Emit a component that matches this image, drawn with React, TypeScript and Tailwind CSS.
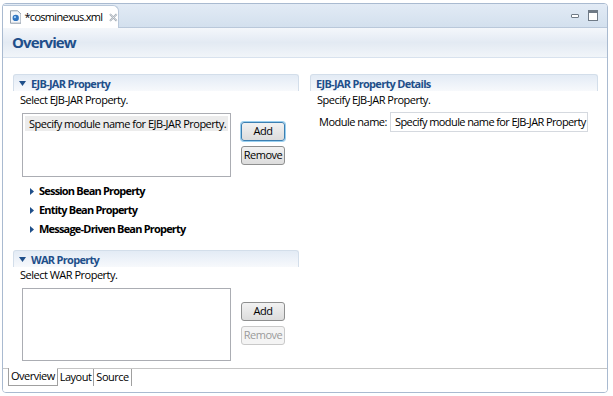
import React from "react";

const font = { fontFamily: '"Open Sans", "Noto Sans", Arial, sans-serif' };

function SectionHeader({ title, arrow }: { title: string; arrow?: boolean }) {
  return (
    <div className="h-[17px] flex items-center border border-[#d3deea] border-b-0 rounded-t-[3px] bg-gradient-to-b from-[#e3ebf5] to-[#f7f9fc] pl-[5px]">
      {arrow && (
        <svg width="7" height="5" viewBox="0 0 7 5" className="mr-[5px]">
          <path d="M0 0 L7 0 L3.5 5 Z" fill="#1f4f8a" />
        </svg>
      )}
      <span className="text-[11px] font-bold text-[#1f4f8a] leading-none tracking-[-0.7px]">{title}</span>
    </div>
  );
}

function Btn({ label, focus, disabled }: { label: string; focus?: boolean; disabled?: boolean }) {
  return (
    <div
      className={
        "w-[44px] h-[19px] rounded-[3px] flex items-center justify-center text-[11px] " +
        (focus
          ? "border border-[#3c7fb1] shadow-[0_0_0_1px_#9ad0f0] bg-gradient-to-b from-[#f2f2f2] to-[#dcdcdc] text-black"
          : disabled
          ? "border border-[#c9c9c9] bg-[#f4f4f4] text-[#9a9a9a]"
          : "border border-[#8e8f8f] bg-gradient-to-b from-[#f2f2f2] to-[#dcdcdc] text-black")
      }
    >
      {label}
    </div>
  );
}

function Twisty({ label }: { label: string }) {
  return (
    <div className="flex items-center h-[19px]">
      <svg width="4" height="7" viewBox="0 0 4 7" className="mr-[5px]">
        <path d="M0 0 L4 3.5 L0 7 Z" fill="#1f4f8a" />
      </svg>
      <span className="text-[11px] font-bold text-black tracking-[-0.8px]">{label}</span>
    </div>
  );
}

export default function App() {
  return (
    <div className="w-[613px] h-[396px] bg-white text-[11px] text-black tracking-[-0.5px]" style={font}>
      <div className="ml-[2px] mt-[3px] w-[606px] h-[390px] border border-[#a9bad0] rounded-[4px] flex flex-col overflow-hidden">
        {/* tab strip */}
        <div className="h-[24px] flex items-end bg-gradient-to-b from-[#e2ebf5] to-[#d3e0ee] border-b border-[#b9c8da] relative">
          <div className="h-[23px] w-[116px] bg-white border-r border-t border-[#b9c8da] rounded-tr-[6px] flex items-center pl-[7px] -mb-[1px]">
            <svg width="12" height="14" viewBox="0 0 12 14" className="mr-[3px]">
              <path d="M0.5 0.5 H8 L11.5 4 V13.5 H0.5 Z" fill="#f4f6f9" stroke="#8b97a6" />
              <circle cx="6" cy="8" r="3.3" fill="#2f74c0" />
              <circle cx="5.2" cy="7.2" r="1.2" fill="#9ccbf5" />
            </svg>
            <span className="text-[11px] tracking-[-0.7px]">*cosminexus.xml</span>
            <svg width="9" height="9" viewBox="0 0 9 9" className="ml-[7px]">
              <path d="M1 1 L8 8 M8 1 L1 8" stroke="#9aa4ae" strokeWidth="2" />
              <path d="M1 1 L8 8 M8 1 L1 8" stroke="#ffffff" strokeWidth="0.7" />
            </svg>
          </div>
          <div className="flex-1" />
          <div className="flex items-center gap-[9px] mr-[9px] mb-[6px]">
            <div className="w-[8px] h-[4px] border border-[#6f7a86] bg-white rounded-[1px]" />
            <div className="w-[10px] h-[11px] border border-[#6f7a86] bg-white border-t-[3px]" />
          </div>
        </div>
        {/* body */}
        <div className="flex-1 flex flex-col bg-white">
          <div className="h-[30px] border-b border-[#d8e2ee] bg-gradient-to-b from-[#f4f7fb] via-[#e3eaf3] to-[#f1f5f9] flex items-center pl-[9px]">
            <span className="text-[15px] font-bold text-[#1f4f8a] tracking-[-0.9px]">Overview</span>
          </div>
          <div className="flex-1 flex pt-[16px]">
            {/* left column */}
            <div className="w-[286px] ml-[10px]">
              <SectionHeader title="EJB-JAR Property" arrow />
              <div className="pl-[7px] h-[20px] leading-[17px]">Select EJB-JAR Property.</div>
              <div className="flex mt-[2px]">
                <div className="ml-[9px] w-[209px] h-[64px] border border-[#abadb3] p-[2px]">
                  <div className="bg-[#ececec] px-[4px] h-[15px] leading-[15px] whitespace-nowrap">
                    Specify module name for EJB-JAR Property.
                  </div>
                </div>
                <div className="ml-[10px] pt-[9px] flex flex-col gap-[5px]">
                  <Btn label="Add" focus />
                  <Btn label="Remove" />
                </div>
              </div>
              <div className="pl-[17px] mt-[5px]">
                <Twisty label="Session Bean Property" />
                <Twisty label="Entity Bean Property" />
                <Twisty label="Message-Driven Bean Property" />
              </div>
              <div className="mt-[11px]">
                <SectionHeader title="WAR Property" arrow />
                <div className="pl-[7px] h-[21px] leading-[15px]">Select WAR Property.</div>
                <div className="flex">
                  <div className="ml-[9px] w-[209px] h-[73px] border border-[#abadb3]" />
                  <div className="ml-[10px] pt-[14px] flex flex-col gap-[5px]">
                    <Btn label="Add" />
                    <Btn label="Remove" disabled />
                  </div>
                </div>
              </div>
            </div>
            {/* right column */}
            <div className="w-[288px] ml-[11px]">
              <SectionHeader title="EJB-JAR Property Details" />
              <div className="pl-[7px] h-[20px] leading-[17px]">Specify EJB-JAR Property.</div>
              <div className="flex items-center pl-[9px] mt-[1px]">
                <span className="w-[71px] shrink-0 whitespace-nowrap">Module name:</span>
                <div className="w-[198px] h-[20px] border border-[#d5d9df] flex items-center pl-[4px] whitespace-nowrap overflow-hidden tracking-[-0.6px]">
                  Specify module name for EJB-JAR Property
                </div>
              </div>
            </div>
          </div>
          {/* bottom tabs */}
          <div className="h-[22px] border-t border-[#c5c5c5] flex items-start pl-[5px] mb-[2px]">
            <div className="h-[18px] px-[2px] bg-white border-l border-b border-[#a0a0a0] flex items-center -mt-[1px]">Overview</div>
            <div className="h-[17px] px-[2px] border-l border-r border-[#a0a0a0] flex items-center">Layout</div>
            <div className="h-[17px] px-[2px] border-r border-[#a0a0a0] flex items-center">Source</div>
          </div>
        </div>
      </div>
    </div>
  );
}
